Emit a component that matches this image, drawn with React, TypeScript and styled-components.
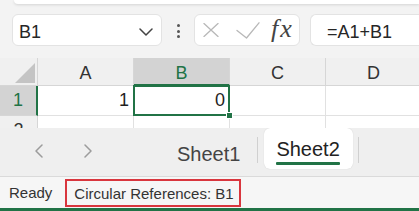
import styled, { createGlobalStyle } from "styled-components";

const GREEN = "#217346";

const GlobalStyle = createGlobalStyle`
  html, body {
    margin: 0;
    padding: 0;
    background: #f3f3f3;
  }
  body {
    font-family: "Liberation Sans", Arial, sans-serif;
    color: #262626;
  }
`;

const COLUMNS = ["A", "B", "C", "D"];
const ACTIVE_COL = "B";

const rows = [
  { label: "1", values: ["1", "0", "", ""], selected: true },
  { label: "2", values: ["", "", "", ""], selected: false },
];

function ChevronDown() {
  return (
    <svg width="14" height="8" viewBox="0 0 14 8" fill="none">
      <path d="M1 1l6 6 6-6" stroke="#444" strokeWidth="1.5" strokeLinecap="round" strokeLinejoin="round" />
    </svg>
  );
}

function CancelIcon() {
  return (
    <svg width="16" height="14" viewBox="0 0 16 14" fill="none">
      <path d="M1 0.5l14 13M15 0.5l-14 13" stroke="#b8b8b8" strokeWidth="1.3" strokeLinecap="round" />
    </svg>
  );
}

function EnterIcon() {
  return (
    <svg width="24" height="17" viewBox="0 0 24 17" fill="none">
      <path d="M1 8.5l9.5 7.5L23 0.8" stroke="#b8b8b8" strokeWidth="1.3" strokeLinecap="round" strokeLinejoin="round" />
    </svg>
  );
}

function Arrow({ dir }: { dir: "left" | "right" }) {
  return (
    <svg width="10" height="14" viewBox="0 0 10 14" fill="none">
      <path
        d={dir === "left" ? "M8 1L2 7l6 6" : "M2 1l6 6-6 6"}
        stroke="#9c9c9c"
        strokeWidth="1.5"
        strokeLinecap="round"
        strokeLinejoin="round"
      />
    </svg>
  );
}

export default function App() {
  return (
    <>
      <GlobalStyle />
      <Window>
        <RibbonEdge />
        <FormulaBar>
          <NameBox>
            <span>B1</span>
            <ChevronDown />
          </NameBox>
          <Grip>
            <Dot />
            <Dot />
            <Dot />
          </Grip>
          <FormulaButtons>
            <CancelIcon />
            <EnterSlot>
              <EnterIcon />
            </EnterSlot>
            <FxLabel>fx</FxLabel>
          </FormulaButtons>
          <FormulaInput>=A1+B1</FormulaInput>
        </FormulaBar>

        <Sheet>
          <Corner>
            <CornerTriangle />
          </Corner>
          {COLUMNS.map((c) => (
            <ColHeader key={c} $selected={c === ACTIVE_COL}>
              {c}
            </ColHeader>
          ))}
          {rows.map((r) => (
            <Row key={r.label} label={r.label} values={r.values} selected={r.selected} />
          ))}
        </Sheet>

        <TabBar>
          <NavButton>
            <Arrow dir="left" />
          </NavButton>
          <NavButton>
            <Arrow dir="right" />
          </NavButton>
          <SheetTab>
            <TabLabel>Sheet1</TabLabel>
          </SheetTab>
          <TabDivider />
          <SheetTab $active>
            <TabLabel>Sheet2</TabLabel>
            <TabUnderline />
          </SheetTab>
          <TabDivider />
        </TabBar>

        <StatusBar>
          <StatusText>Ready</StatusText>
          <Highlight>
            <StatusText>Circular References: B1</StatusText>
          </Highlight>
        </StatusBar>
      </Window>
    </>
  );
}

function Row({ label, values, selected }: { label: string; values: string[]; selected: boolean }) {
  return (
    <>
      <RowHeader $selected={selected}>{label}</RowHeader>
      {values.map((v, i) => {
        const active = selected && COLUMNS[i] === ACTIVE_COL;
        return (
          <Cell key={i} $active={active}>
            {v}
            {active && <FillHandle />}
          </Cell>
        );
      })}
    </>
  );
}

const Window = styled.div`
  width: 419px;
  height: 211px;
  overflow: hidden;
  display: flex;
  flex-direction: column;
  background: #f3f3f3;
`;

const RibbonEdge = styled.div`
  height: 4px;
  margin-left: 14px;
  background: #ffffff;
  border-bottom-left-radius: 8px;
  box-shadow: 0 1px 3px rgba(0, 0, 0, 0.13);
  flex-shrink: 0;
`;

const FormulaBar = styled.div`
  display: flex;
  align-items: stretch;
  height: 32px;
  margin: 10px 0 12px 12px;
  flex-shrink: 0;
`;

const Box = styled.div`
  box-sizing: border-box;
  height: 32px;
  background: #ffffff;
  border: 1px solid #e3e3e3;
  border-radius: 6px;
  display: flex;
  align-items: center;
`;

const NameBox = styled(Box)`
  width: 150px;
  justify-content: space-between;
  padding: 4px 8px 0 6px;
  font-size: 18px;
  color: #262626;
`;

const Grip = styled.div`
  width: 32px;
  display: flex;
  flex-direction: column;
  align-items: center;
  justify-content: center;
  gap: 2.5px;
  padding-top: 2px;
`;

const Dot = styled.span`
  width: 3px;
  height: 3px;
  border-radius: 50%;
  background: #555;
`;

const FormulaButtons = styled(Box)`
  width: 106px;
  padding-left: 8px;
`;

const EnterSlot = styled.span`
  display: flex;
  margin: 0 0 0 17px;
`;

const FxLabel = styled.span`
  margin-left: 11px;
  font-family: "Liberation Serif", "Times New Roman", serif;
  font-style: italic;
  font-size: 26px;
  letter-spacing: 2px;
  color: #444;
  line-height: 1;
  padding-bottom: 2px;
`;

const FormulaInput = styled(Box)`
  flex: 1;
  margin-left: 10px;
  border-right: none;
  border-radius: 6px 0 0 6px;
  padding: 4px 0 0 16px;
  font-size: 18px;
  color: #262626;
`;

const Sheet = styled.div`
  display: grid;
  grid-template-columns: 38px repeat(4, 96px);
  grid-template-rows: 28px 30px 30px;
  height: 70px;
  overflow: hidden;
  flex-shrink: 0;
  font-size: 18px;
`;

const HeaderBase = styled.div`
  box-sizing: border-box;
  display: flex;
  align-items: center;
  justify-content: center;
  background: #f0f0f0;
  color: #333;
  border-right: 1px solid #d6d6d6;
  border-bottom: 1px solid #d6d6d6;
`;

const Corner = styled(HeaderBase)`
  align-items: flex-end;
  justify-content: flex-end;
  padding: 0 2px 2px 0;
`;

const CornerTriangle = styled.div`
  width: 20px;
  height: 20px;
  background: #c4c4c4;
  clip-path: polygon(100% 0, 100% 100%, 0 100%);
`;

const ColHeader = styled(HeaderBase)<{ $selected?: boolean }>`
  padding-top: 4px;
  background: ${(p) => (p.$selected ? "#d3d3d3" : "#f0f0f0")};
  color: ${(p) => (p.$selected ? GREEN : "#333")};
  border-bottom: ${(p) => (p.$selected ? `2px solid ${GREEN}` : "1px solid #d6d6d6")};
`;

const RowHeader = styled(HeaderBase)<{ $selected?: boolean }>`
  background: ${(p) => (p.$selected ? "#d3d3d3" : "#f0f0f0")};
  color: ${(p) => (p.$selected ? GREEN : "#333")};
  border-right: ${(p) => (p.$selected ? `2px solid ${GREEN}` : "1px solid #d6d6d6")};
`;

const Cell = styled.div<{ $active?: boolean }>`
  position: relative;
  box-sizing: border-box;
  display: flex;
  align-items: center;
  justify-content: flex-end;
  padding-right: 4px;
  background: #ffffff;
  color: #1f1f1f;
  border-right: 1px solid #e1e1e1;
  border-bottom: 1px solid #e1e1e1;

  ${(p) =>
    p.$active &&
    `
    &::after {
      content: "";
      position: absolute;
      inset: -1px -1px -1px -1px;
      border: 2px solid ${GREEN};
      z-index: 1;
    }
  `}
`;

const FillHandle = styled.span`
  position: absolute;
  right: -4px;
  bottom: -4px;
  width: 5px;
  height: 5px;
  background: ${GREEN};
  border: 1px solid #ffffff;
  z-index: 2;
`;

const TabBar = styled.div`
  display: flex;
  align-items: flex-start;
  height: 48px;
  padding-left: 14px;
  background: #efefef;
  flex-shrink: 0;
`;

const NavButton = styled.div`
  width: 49px;
  height: 46px;
  display: flex;
  align-items: center;
  justify-content: center;
`;

const SheetTab = styled.div<{ $active?: boolean }>`
  box-sizing: border-box;
  height: 41px;
  display: flex;
  flex-direction: column;
  align-items: stretch;
  padding: ${(p) => (p.$active ? "11px 13px 0 12px" : "16px 12px 0 12px")};
  margin-left: ${(p) => (p.$active ? "0" : "53px")};
  background: ${(p) => (p.$active ? "#ffffff" : "transparent")};
  border-radius: 6px;
  box-shadow: ${(p) => (p.$active ? "0 0 1px rgba(0, 0, 0, 0.18)" : "none")};
  color: ${(p) => (p.$active ? "#222" : "#444")};
`;

const TabLabel = styled.span`
  font-size: 20px;
  line-height: 20px;
`;

const TabUnderline = styled.span`
  height: 3px;
  margin-top: 3px;
  border-radius: 1px;
  background: ${GREEN};
`;

const TabDivider = styled.span`
  width: 1px;
  height: 26px;
  margin: 9px 6px 0 5px;
  background: #d0d0d0;
`;

const StatusBar = styled.div`
  box-sizing: border-box;
  height: 35px;
  display: flex;
  align-items: center;
  gap: 13px;
  padding-left: 9px;
  background: #f6f6f6;
  border-top: 1px solid #dadada;
  border-bottom: 3px solid ${GREEN};
  flex-shrink: 0;
`;

const StatusText = styled.span`
  font-size: 15px;
  color: #333;
`;

const Highlight = styled.div`
  box-sizing: border-box;
  height: 28px;
  display: flex;
  align-items: center;
  padding: 1px 5px 0 7px;
  border: 2px solid #d9363e;
`;
